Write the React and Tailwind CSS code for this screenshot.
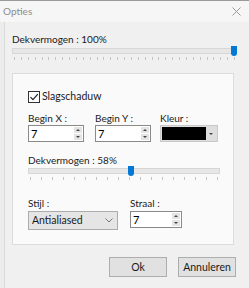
import React from "react";

const font = { fontFamily: '"Segoe UI", Lato, "Noto Sans", sans-serif' };

const Ticks = ({ count }) => (
  <div className="flex justify-between px-[2px] mt-[3px] h-[3px]">
    {Array.from({ length: count }).map((_, i) => (
      <span key={i} className="w-px h-[3px] bg-[#c4c4c4]" />
    ))}
  </div>
);

const Slider = ({ width, pos, ticks }) => (
  <div style={{ width }}>
    <div className="relative h-[6px] bg-[#e7e7e7] border border-[#d6d6d6]">
      <div
        className="absolute top-[-3px] w-[6px] h-[10px] bg-[#0078d7] rounded-b-[3px]"
        style={{ left: pos }}
      />
    </div>
    <Ticks count={ticks} />
  </div>
);

const Spin = ({ value, width }) => (
  <div
    className="flex h-[17px] bg-white border border-[#8a8a8a] items-stretch"
    style={{ width }}
  >
    <span className="flex-1 pl-[2px] text-[11px] leading-[15px] text-black">{value}</span>
    <div className="w-[9px] flex flex-col gap-px py-px pr-px">
      <span className="flex-1 bg-[#e4e4e4] flex items-center justify-center">
        <span className="w-0 h-0 border-l-[2px] border-r-[2px] border-b-[2px] border-l-transparent border-r-transparent border-b-[#444]" />
      </span>
      <span className="flex-1 bg-[#e4e4e4] flex items-center justify-center">
        <span className="w-0 h-0 border-l-[2px] border-r-[2px] border-t-[2px] border-l-transparent border-r-transparent border-t-[#444]" />
      </span>
    </div>
  </div>
);

export default function App() {
  return (
    <div className="w-[249px] h-[288px] bg-[#f0f0f0] flex flex-col overflow-hidden text-[#1a1a1a]" style={font}>
      {/* Title bar */}
      <div className="h-[22px] bg-[#f6f6f6] border-t border-[#9a9a9a] flex items-center justify-between pl-[3px] pr-[8px]">
        <span className="text-[10px] text-[#8c8c8c]">Opties</span>
        <svg width="9" height="9" viewBox="0 0 9 9" stroke="#9a9a9a" strokeWidth="1">
          <path d="M0.5 0.5L8.5 8.5M8.5 0.5L0.5 8.5" />
        </svg>
      </div>

      <div className="flex flex-1">
        <div className="w-[5px] bg-[#ececec] border-r border-[#dadada]" />
        <div className="flex-1 pl-[7px] text-[10px] leading-[13px]">
          <div className="mt-[11px]">Dekvermogen : 100%</div>
          <div className="mt-[2px]">
            <Slider width={225} pos={218} ticks={33} />
          </div>

          {/* Group panel */}
          <div className="mt-[13px] w-[222px] h-[172px] bg-[#fafafa] border border-[#dcdcdc] pl-[15px] pt-[16px]">
            <div className="flex items-center gap-[2px]">
              <span className="w-[12px] h-[12px] border border-[#333] bg-white flex items-center justify-center">
                <svg width="10" height="10" viewBox="0 0 10 10" fill="none" stroke="#222" strokeWidth="1.2">
                  <path d="M1.5 5.2L4 7.7L8.8 2.2" />
                </svg>
              </span>
              <span className="text-[10.5px]">Slagschaduw</span>
            </div>

            <div className="flex mt-[9px]">
              <div className="w-[67px]">
                <div>Begin X :</div>
                <Spin value="7" width={56} />
              </div>
              <div className="w-[65px]">
                <div>Begin Y :</div>
                <Spin value="7" width={56} />
              </div>
              <div>
                <div>Kleur :</div>
                <div className="flex w-[58px] h-[17px] bg-[#dedede] border border-[#c9c9c9] p-px">
                  <span className="w-[44px] bg-black" />
                  <span className="flex-1 flex items-center justify-center">
                    <span className="w-0 h-0 border-l-[2px] border-r-[2px] border-t-[2px] border-l-transparent border-r-transparent border-t-[#444]" />
                  </span>
                </div>
              </div>
            </div>

            <div className="mt-[12px]">Dekvermogen : 58%</div>
            <div className="mt-[1px]">
              <Slider width={192} pos={99} ticks={18} />
            </div>

            <div className="flex mt-[17px]">
              <div className="w-[102px]">
                <div>Stijl :</div>
                <div className="mt-[1px] w-[90px] h-[19px] bg-[#e5e5e5] border border-[#acacac] flex items-center justify-between pl-[3px] pr-[4px]">
                  <span className="text-[10.5px] leading-[15px]">Antialiased</span>
                  <svg width="8" height="5" viewBox="0 0 8 5" fill="none" stroke="#777" strokeWidth="1">
                    <path d="M0.5 0.5L4 4L7.5 0.5" />
                  </svg>
                </div>
              </div>
              <div>
                <div>Straal :</div>
                <div className="mt-[1px]"><Spin value="7" width={52} /></div>
              </div>
            </div>
          </div>

          {/* Buttons */}
          <div className="flex justify-end gap-[11px] mt-[12px] w-[224px]">
            <button className="w-[58px] h-[20px] bg-[#e1e1e1] border border-[#adadad] text-[10.5px] leading-[16px]">Ok</button>
            <button className="w-[58px] h-[20px] bg-[#e1e1e1] border border-[#adadad] text-[10.5px] leading-[16px]">Annuleren</button>
          </div>
        </div>
      </div>
    </div>
  );
}
